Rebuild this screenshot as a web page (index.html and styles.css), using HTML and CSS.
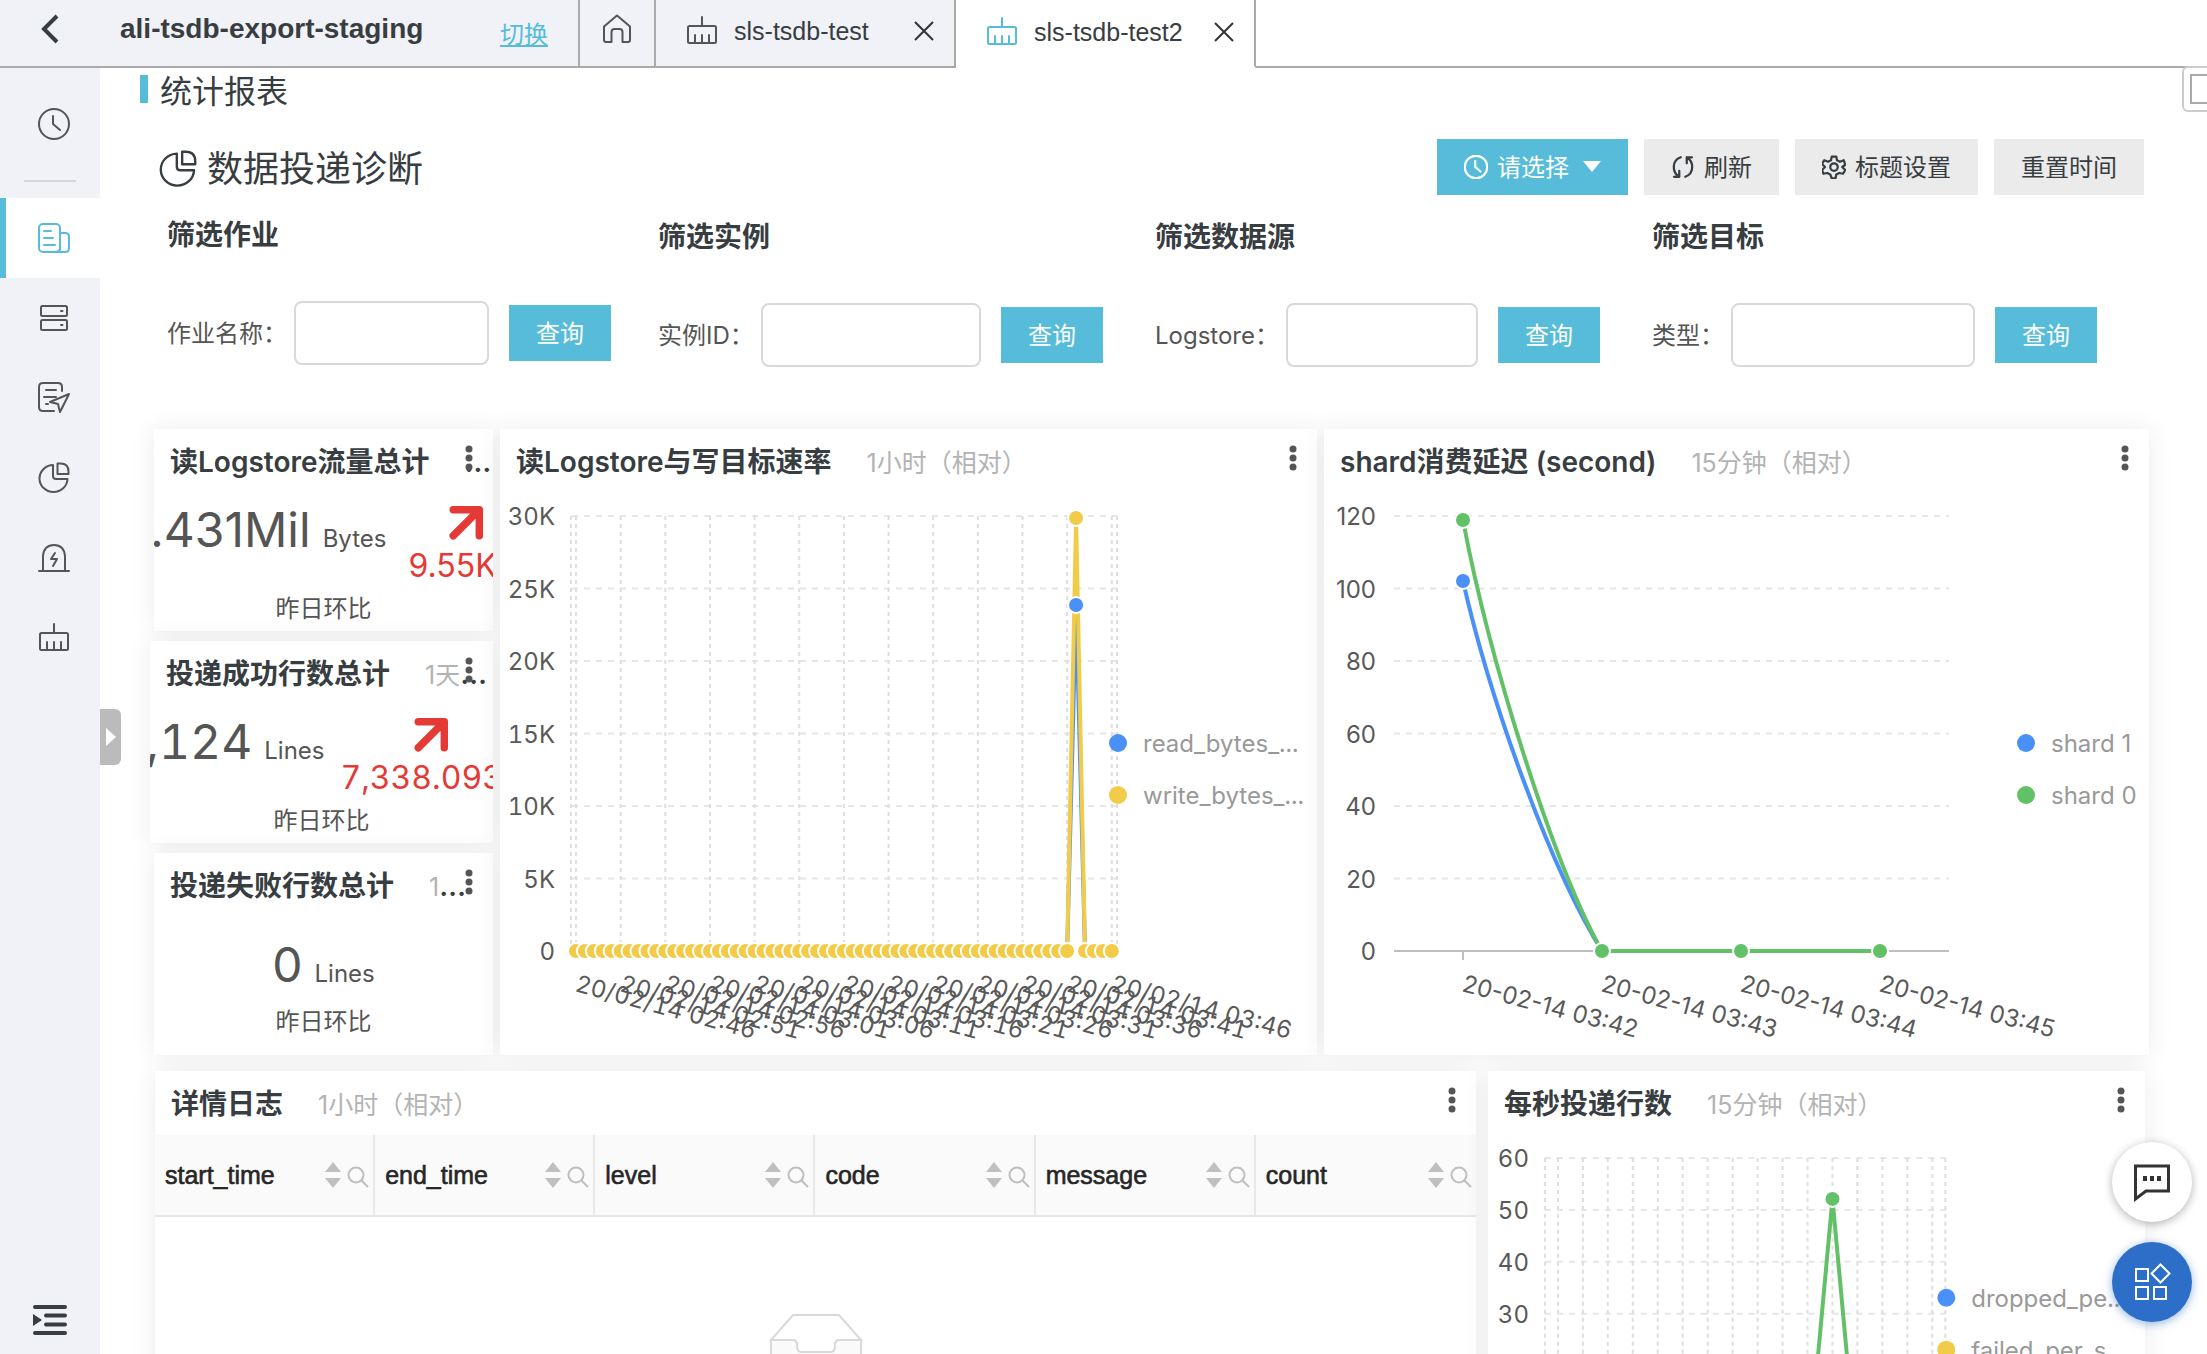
FILE: index.html
```html
<!DOCTYPE html>
<html lang="zh-CN">
<head>
  <meta charset="UTF-8">
  <title>数据投递诊断</title>
  <link rel="stylesheet" href="styles.css">
</head>
<body>

  <!-- shared icons -->
  <svg class="sprite" aria-hidden="true">
    <symbol id="clock" viewBox="0 0 32 32"><circle cx="16" cy="16" r="15"/><path d="M15 8v8l7 6"/></symbol>
    <symbol id="pie" viewBox="0 0 32 32"><path d="M15 3A14 13.5 0 1 0 29.500 17H18q-3 0-3-3z"/><path d="M19.500 1.500h3q8 0 8 8v2.500h-11z"/></symbol>
    <symbol id="brush" viewBox="0 0 32 32"><rect x="2" y="11" width="28" height="17" rx="1.500"/><path d="M16 11V2M9 20v8M16 20v8M23 20v8"/></symbol>
    <symbol id="close" viewBox="0 0 20 20"><path d="M1 1l18 18M19 1L1 19"/></symbol>
    <symbol id="kebab" viewBox="0 0 8 26"><circle cx="4" cy="4" r="3.500"/><circle cx="4" cy="13" r="3.500"/><circle cx="4" cy="22" r="3.500"/></symbol>
    <symbol id="arrow" viewBox="0 0 32 32"><path d="M4 3.500h24.500V28M27 5L4 28"/></symbol>
    <symbol id="sort" viewBox="0 0 16 26"><path d="M8 0l8 10H0zM8 26l8-10H0z"/></symbol>
    <symbol id="search" viewBox="0 0 22 22"><circle cx="9" cy="9" r="7.500"/><path d="M14 14l7 7"/></symbol>
  </svg>

  <header class="topbar">
    <div class="project">
      <button class="back" aria-label="返回"><svg viewBox="0 0 20 30"><path d="M17 2L4 15l13 13"/></svg></button>
      <span class="project-name">ali-tsdb-export-staging</span>
      <a class="switch" href="#">切换</a>
    </div>
    <a class="home" href="#" aria-label="首页"><svg class="icon" viewBox="0 0 32 32"><path d="M3 13.500L16 2.500l13 11V27q0 2-2 2h-5.500V19q0-3-3-3h-5q-3 0-3 3v10H5q-2 0-2-2z"/></svg></a>
    <div class="tab">
      <svg class="icon"><use href="#brush"/></svg>
      <a href="#">sls-tsdb-test</a>
      <button class="close" aria-label="关闭"><svg><use href="#close"/></svg></button>
    </div>
    <div class="tab active">
      <svg class="icon"><use href="#brush"/></svg>
      <a href="#">sls-tsdb-test2</a>
      <button class="close" aria-label="关闭"><svg><use href="#close"/></svg></button>
    </div>
    <div class="topbar-rest"></div>
  </header>

  <div class="layout">
    <nav class="sidebar">
      <a class="history" href="#" aria-label="历史"><svg class="icon"><use href="#clock"/></svg></a>
      <a class="active" href="#" aria-label="日志库"><svg class="icon" viewBox="0 0 32 32"><rect x="1" y="2" width="21" height="28" rx="4"/><path d="M22 11h5q4 0 4 4v11q0 4-4 4h-9q4 0 4-4M6 9h7M6 16h9M6 23h11"/></svg></a>
      <a href="#" aria-label="资源"><svg class="icon" viewBox="0 0 32 32"><rect x="3" y="4" width="26" height="10" rx="1.500"/><rect x="3" y="18" width="26" height="10" rx="1.500"/><path d="M23 9h1.500M23 23h1.500"/></svg></a>
      <a href="#" aria-label="作业"><svg class="icon" viewBox="0 0 32 32"><path d="M24 9V5q0-4-4-4H5Q1 1 1 5v20q0 4 4 4h11M8 8h10M6 15h12M8 22h2"/><path d="M31 12l-9 18-2-8-8-2z"/></svg></a>
      <a href="#" aria-label="仪表盘"><svg class="icon"><use href="#pie"/></svg></a>
      <a href="#" aria-label="告警"><svg class="icon" viewBox="0 0 32 32"><path d="M1 29h30M5 29V14Q6 3 16 3t11 11v15M17 11l-4 6h6l-4 7"/></svg></a>
      <a href="#" aria-label="清理"><svg class="icon"><use href="#brush"/></svg></a>
      <button class="menu-toggle" aria-label="展开菜单"><svg viewBox="0 0 36 32"><path d="M3 3h30M14 11.500h19M14 20.500h19M3 29h30"/><path class="solid" d="M1 10v12l9-6z"/></svg></button>
    </nav>

    <main class="content">
      <h1 class="section-title">统计报表</h1>

      <div class="page-head">
        <h2><svg class="icon"><use href="#pie"/></svg>数据投递诊断</h2>
        <div class="actions">
          <button class="btn primary"><svg class="icon"><use href="#clock"/></svg>请选择<span class="caret"></span></button>
          <button class="btn"><svg class="icon" viewBox="0 0 32 32"><path d="M13 3C1 7 1 23 11 29M11 21v8H4M19 29C31 25 31 9 21 3M21 11V3h7"/></svg>刷新</button>
          <button class="btn"><svg class="icon" viewBox="0 0 32 32"><path d="M13 2h6l1 5 4 2 5-2 2 6-4 3 4 4-3 5-5-1-4 2-1 5h-5l-2-5-4-2-5 1-2-5 4-4-4-4 3-5 5 2 4-2z"/><circle cx="16" cy="16" r="5"/></svg>标题设置</button>
          <button class="btn">重置时间</button>
        </div>
      </div>

      <div class="filters">
        <form class="filter">
          <h3>筛选作业</h3>
          <div class="filter-row"><label for="job">作业名称：</label><input id="job" type="text"><button class="btn primary" type="button">查询</button></div>
        </form>
        <form class="filter">
          <h3>筛选实例</h3>
          <div class="filter-row"><label for="instance">实例ID：</label><input id="instance" type="text"><button class="btn primary" type="button">查询</button></div>
        </form>
        <form class="filter">
          <h3>筛选数据源</h3>
          <div class="filter-row"><label for="logstore">Logstore：</label><input id="logstore" type="text"><button class="btn primary" type="button">查询</button></div>
        </form>
        <form class="filter">
          <h3>筛选目标</h3>
          <div class="filter-row"><label for="target">类型：</label><input id="target" type="text"><button class="btn primary" type="button">查询</button></div>
        </form>
      </div>

      <div class="row row-top">
        <div class="stats">
          <section class="card stat">
            <div class="card-title">读Logstore流量总计<span>&emsp;1天（相对）</span></div>
            <button class="kebab" aria-label="更多"><svg><use href="#kebab"/></svg></button>
            <div class="stat-row">
              <p class="value">.431Mil<small>Bytes</small></p>
              <div class="trend"><svg><use href="#arrow"/></svg><span>9.55K</span></div>
            </div>
            <p class="caption">昨日环比</p>
          </section>
          <section class="card stat wide">
            <div class="card-title">投递成功行数总计<span>&emsp;1天（相对）</span></div>
            <button class="kebab" aria-label="更多"><svg><use href="#kebab"/></svg></button>
            <div class="stat-row">
              <p class="value">,124<small>Lines</small></p>
              <div class="trend"><svg><use href="#arrow"/></svg><span>7,338.093</span></div>
            </div>
            <p class="caption">昨日环比</p>
          </section>
          <section class="card stat plain">
            <div class="card-title">投递失败行数总计<span>&emsp;1天（相对）</span></div>
            <button class="kebab" aria-label="更多"><svg><use href="#kebab"/></svg></button>
            <div class="stat-row">
              <p class="value">0<small>Lines</small></p>
            </div>
            <p class="caption">昨日环比</p>
          </section>
        </div>

        <section class="card">
          <div class="card-title">读Logstore与写目标速率<span>&emsp;1小时（相对）</span></div>
          <button class="kebab" aria-label="更多"><svg><use href="#kebab"/></svg></button>
          <svg class="chart tabular" id="rate" viewBox="0 0 817 562"></svg>
        </section>

        <section class="card">
          <div class="card-title">shard消费延迟 (second)<span>&emsp;15分钟（相对）</span></div>
          <button class="kebab" aria-label="更多"><svg><use href="#kebab"/></svg></button>
          <svg class="chart" id="delay" viewBox="0 0 825 562"></svg>
        </section>
      </div>

      <div class="row row-bottom">
        <section class="card">
          <div class="card-title">详情日志<span>&emsp;1小时（相对）</span></div>
          <button class="kebab" aria-label="更多"><svg><use href="#kebab"/></svg></button>
          <table class="logs">
            <thead>
              <tr>
                <th><div>start_time<svg class="sort"><use href="#sort"/></svg><svg class="search"><use href="#search"/></svg></div></th>
                <th><div>end_time<svg class="sort"><use href="#sort"/></svg><svg class="search"><use href="#search"/></svg></div></th>
                <th><div>level<svg class="sort"><use href="#sort"/></svg><svg class="search"><use href="#search"/></svg></div></th>
                <th><div>code<svg class="sort"><use href="#sort"/></svg><svg class="search"><use href="#search"/></svg></div></th>
                <th><div>message<svg class="sort"><use href="#sort"/></svg><svg class="search"><use href="#search"/></svg></div></th>
                <th><div>count<svg class="sort"><use href="#sort"/></svg><svg class="search"><use href="#search"/></svg></div></th>
              </tr>
            </thead>
            <tbody>
              <tr><td colspan="6"><svg class="empty" viewBox="0 0 94 80"><path d="M24 2h46l22 25H70q-4 0-4 6 0 6-4 6H32q-4 0-4-6 0-6-4-6H2z" fill="#fff"/><path d="M2 27h22q4 0 4 6 0 6 4 6h30q4 0 4-6 0-6 4-6h22v40q0 6-6 6H8q-6 0-6-6z" fill="#fafafa"/></svg></td></tr>
            </tbody>
          </table>
        </section>

        <section class="card">
          <div class="card-title">每秒投递行数<span>&emsp;15分钟（相对）</span></div>
          <button class="kebab" aria-label="更多"><svg><use href="#kebab"/></svg></button>
          <svg class="chart tabular" id="lines" viewBox="0 0 658 420"></svg>
        </section>
      </div>
    </main>
  </div>

  <button class="drawer" aria-label="展开"></button>
  <button class="fullscreen" aria-label="全屏"><span></span></button>
  <button class="fab chat" aria-label="反馈"><svg viewBox="0 0 40 40"><path d="M3.500 4h33v25H14L3.500 37z"/><path class="solid" d="M11 14h4v5h-4zM18 14h4v5h-4zM25 14h4v5h-4z"/></svg></button>
  <button class="fab apps" aria-label="应用"><svg viewBox="0 0 40 40"><path d="M4 7h12v12H4zM4 25h12v12H4zM22 25h12v12H22zM28.500 2.500l9 9-9 9-9-9z"/></svg></button>

  <script src="script.js"></script>
</body>
</html>
```

FILE: styles.css
```css
* {
  box-sizing: border-box;
}

body {
  margin: 0;
  height: 100vh;
  overflow: hidden;
  display: flex;
  flex-direction: column;
  background: #fff;
  color: #373d41;
  font-family: Inter, "Noto Sans CJK SC", sans-serif;
  font-size: 24px;
}

h1, h2, h3, p {
  margin: 0;
}

button, input {
  font: inherit;
}

button {
  padding: 0;
  border: none;
  background: none;
  color: inherit;
  cursor: pointer;
}

.sprite {
  display: none;
}

.icon {
  width: 32px;
  height: 32px;
  flex: none;
  fill: none;
  stroke: #555;
  stroke-width: 2;
  stroke-linecap: round;
  stroke-linejoin: round;
}

/* Top bar */
.topbar {
  display: flex;
  height: 68px;
  flex: none;
  background: #f0f2f7;
  font-family: "Liberation Sans", "Noto Sans CJK SC", sans-serif;
}

.topbar > * {
  border-bottom: 2px solid #aaa;
  border-right: 2px solid #aaa;
}

.project {
  display: flex;
  align-items: center;
  width: 580px;
  padding: 0 30px 8px 40px;
}

.back {
  margin-right: 60px;
  height: 30px;
}

.back svg {
  display: block;
  width: 20px;
  height: 30px;
  fill: none;
  stroke: #373d41;
  stroke-width: 4;
}

.project-name {
  font-size: 28px;
  font-weight: bold;
}

.switch {
  margin-left: auto;
  padding-top: 6px;
  color: #56bcda;
}

.home {
  display: flex;
  align-items: center;
  justify-content: center;
  width: 76px;
  padding-bottom: 8px;
}

.tab {
  display: flex;
  align-items: center;
  width: 300px;
  padding: 0 20px 4px 30px;
  font-size: 25px;
}

.tab a {
  margin-left: 16px;
  color: #373d41;
  text-decoration: none;
}

.tab.active {
  background: #fff;
  border-bottom-color: #fff;
  padding-bottom: 2px;
}

.tab.active .icon {
  stroke: #56bcda;
}

.close {
  margin-left: auto;
  height: 20px;
}

.close svg {
  display: block;
  width: 20px;
  height: 20px;
  stroke: #333;
  stroke-width: 2;
}

.topbar-rest {
  flex: 1;
  background: #fff;
  border-right: none;
}

.layout {
  display: flex;
  flex: 1;
  min-height: 0;
}

/* Sidebar */
.sidebar {
  display: flex;
  flex-direction: column;
  width: 100px;
  flex: none;
  background: #f0f2f7;
}

.sidebar a {
  display: flex;
  align-items: center;
  height: 80px;
  padding-left: 38px;
}

.sidebar .history {
  height: 114px;
  margin: 0 24px 16px;
  padding-left: 14px;
  border-bottom: 2px solid #d5d7da;
}

.sidebar a.active {
  background: #fff;
  border-left: 6px solid #56bcda;
  padding-left: 32px;
}

.sidebar a.active .icon {
  stroke: #56bcda;
}

.menu-toggle {
  margin: auto 0 18px 32px;
  width: 36px;
  height: 32px;
}

.menu-toggle svg {
  display: block;
  stroke: #373d41;
  stroke-width: 4;
  stroke-linecap: round;
}

.menu-toggle .solid {
  fill: #373d41;
  stroke: none;
}

/* Content */
.content {
  flex: 1;
  min-width: 0;
  overflow: hidden;
  padding: 7px 58px 0 40px;
}

.section-title {
  border-left: 8px solid #56bcda;
  padding: 6px 0 0 12px;
  font-size: 32px;
  line-height: 22px;
  font-weight: normal;
}

.page-head {
  display: flex;
  align-items: center;
  justify-content: space-between;
  margin: 36px 5px 20px 19px;
}

.page-head h2 {
  display: flex;
  align-items: center;
  gap: 10px;
  padding-top: 4px;
  font-size: 36px;
  line-height: 52px;
  font-weight: normal;
}

.page-head h2 .icon {
  width: 38px;
  height: 38px;
  stroke: #373d41;
}

.actions {
  display: flex;
  gap: 16px;
}

.btn {
  display: flex;
  align-items: center;
  gap: 9px;
  height: 56px;
  padding: 0 27px 4px;
  background: #ebebeb;
  white-space: nowrap;
}

.btn .icon {
  width: 24px;
  height: 24px;
  margin-top: 4px;
  stroke: currentColor;
  stroke-width: 3;
}

.btn.primary {
  background: #56bcda;
  color: #fff;
}

.caret {
  margin: 2px 0 0 5px;
  border: 9px solid transparent;
  border-top: 11px solid #fff;
  border-bottom: none;
}

/* Filters */
.filters {
  display: grid;
  grid-template-columns: 491fr 497fr 497fr 497fr;
  padding-left: 27px;
}

.filter {
  min-width: 0;
  padding-right: 47px;
}

.filter + .filter {
  padding: 2px 52px 0 0;
}

.filter h3 {
  font-size: 28px;
  line-height: 40px;
  font-weight: 600;
}

.filter-row {
  display: flex;
  align-items: center;
  margin-top: 46px;
  color: #555;
}

.filter-row label {
  flex: none;
  padding-bottom: 4px;
}

.filter-row input {
  flex: 1;
  min-width: 0;
  height: 64px;
  margin: 0 20px 0 7px;
  padding: 0 12px;
  border: 2px solid #d9d9d9;
  border-radius: 8px;
}

/* Cards */
.row {
  display: grid;
}

.row-top {
  grid-template-columns: 343fr 817fr 825fr;
  gap: 7px;
  margin-top: 62px;
  padding-left: 10px;
}

.row-bottom {
  grid-template-columns: 1321fr 657fr;
  gap: 12px;
  margin-top: 16px;
  padding: 0 4px 0 15px;
}

.card {
  position: relative;
  min-width: 0;
  background: #fff;
  box-shadow: 0 0 24px rgba(0, 0, 0, 0.08);
}

.card-title {
  height: 64px;
  padding-left: 16px;
  overflow: hidden;
  font-size: 28px;
  line-height: 66px;
  font-weight: 600;
  white-space: nowrap;
  text-overflow: ellipsis;
}

.card-title span {
  margin-left: 10px;
  font-size: 25px;
  font-weight: normal;
  color: #b3b3b3;
}

.kebab {
  position: absolute;
  top: 16px;
  right: 20px;
  height: 26px;
}

.kebab svg {
  display: block;
  width: 8px;
  height: 26px;
  fill: #555;
}

.stats {
  display: flex;
  flex-direction: column;
  gap: 10px;
  min-width: 0;
}

.stat {
  height: 202px;
  margin-left: 4px;
  color: #555;
}

.stat .card-title {
  color: #373d41;
}

.stat-row {
  display: flex;
  height: 101px;
  overflow: hidden;
  white-space: nowrap;
}

.value {
  margin-left: -4px;
  font-size: 48px;
  line-height: 74px;
}

.value small {
  margin-left: 12px;
  font-size: 24px;
}

.trend {
  display: flex;
  flex-direction: column;
  align-items: center;
  flex: none;
  width: 115px;
  margin: 13px 0 0 22px;
  color: #e53935;
  font-size: 32px;
  line-height: 38px;
}

.trend span {
  align-self: flex-start;
}

.trend svg {
  width: 34px;
  height: 34px;
  flex: none;
  margin-bottom: 7px;
  fill: none;
  stroke: #e53935;
  stroke-width: 7;
  stroke-linecap: round;
  stroke-linejoin: round;
}

.caption {
  line-height: 30px;
  text-align: center;
}

.wide {
  margin-left: 0;
}

.wide .stat-row {
  font-variant-numeric: tabular-nums;
}

.wide .trend {
  width: 180px;
  margin-left: 16px;
}

.plain .card-title {
  padding-right: 12px;
}

.plain .stat-row {
  height: 90px;
  padding-top: 11px;
  justify-content: center;
}

.plain .value {
  margin-left: 0;
}

/* Charts */
.chart {
  display: block;
  width: 100%;
  font-size: 24px;
  fill: #595959;
}

.chart.tabular {
  font-variant-numeric: tabular-nums;
}

.chart .legend {
  fill: #999;
}

.chart .grid {
  stroke: #e6e6e6;
  stroke-width: 2;
  stroke-dasharray: 6 6;
}

.chart .grid.vertical {
  stroke: #dedede;
  stroke-dasharray: 4 4;
}

.chart .axis {
  stroke: #bfbfbf;
  stroke-width: 2;
}

.chart .line {
  fill: none;
  stroke-width: 4;
}

.chart .dot {
  stroke: #fff;
  stroke-width: 2;
}

/* Log table */
.logs {
  width: 100%;
  table-layout: fixed;
  border-collapse: separate;
  border-spacing: 0;
}

.logs th {
  height: 82px;
  padding: 0 4px 0 10px;
  background: #fafafa;
  border-right: 2px solid #e8e8e8;
  border-bottom: 2px solid #e8e8e8;
  color: #262626;
  font: 25px "Liberation Sans", sans-serif;
  -webkit-text-stroke: 0.6px #262626;
}

.logs th:last-child {
  border-right: none;
}

.logs th div {
  display: flex;
  align-items: center;
}

.logs .sort {
  width: 16px;
  height: 26px;
  margin: 0 6px 0 auto;
  fill: #bfbfbf;
}

.logs .search {
  width: 22px;
  height: 22px;
  margin-top: 4px;
  fill: none;
  stroke: #bfbfbf;
  stroke-width: 2;
}

.logs td {
  padding: 96px 0;
  text-align: center;
}

.empty {
  width: 94px;
  height: 80px;
  stroke: #d9d9d9;
  stroke-width: 2;
}

/* Floating controls */
.drawer {
  position: fixed;
  left: 100px;
  top: 709px;
  width: 21px;
  height: 56px;
  background: #bbb;
  border-radius: 0 6px 6px 0;
}

.drawer::after {
  content: "";
  display: block;
  margin-left: 6px;
  border: 9px solid transparent;
  border-left: 10px solid #fff;
  border-right: none;
}

.fullscreen {
  position: fixed;
  top: 66px;
  right: -20px;
  width: 45px;
  height: 46px;
  padding: 6px;
  background: #fff;
  border: 2px solid #ccc;
  border-radius: 6px;
}

.fullscreen span {
  display: block;
  height: 30px;
  border: 2px solid #aaa;
}

.fab {
  position: fixed;
  right: 15px;
  width: 80px;
  height: 80px;
  border-radius: 50%;
}

.fab svg {
  display: block;
  width: 40px;
  height: 40px;
  margin: auto;
  fill: none;
  stroke-width: 3;
}

.chat {
  bottom: 132px;
  background: #fff;
  box-shadow: 0 2px 10px rgba(0, 0, 0, 0.3);
}

.chat svg {
  stroke: #333;
}

.chat .solid {
  fill: #333;
  stroke: none;
}

.apps {
  bottom: 32px;
  background: #2d6fc8;
  box-shadow: 0 2px 10px rgba(45, 111, 200, 0.5);
}

.apps svg {
  stroke: #fff;
  stroke-width: 2;
}
```

FILE: script.js
```js
const BLUE = "#4a90f7";
const YELLOW = "#f2cc49";
const GREEN = "#62c067";

function draw(id, parts) {
  document.getElementById(id).innerHTML = parts.join("");
}

function line(x1, y1, x2, y2, cls) {
  return `<line class="${cls}" x1="${x1}" y1="${y1}" x2="${x2}" y2="${y2}"/>`;
}

function dot(x, y, color, r = 8) {
  return `<circle class="dot" cx="${x}" cy="${y}" r="${r}" fill="${color}"/>`;
}

function path(d, color) {
  return `<path class="line" d="${d}" stroke="${color}"/>`;
}

// horizontal grid lines with their labels
function yAxis(labels, top, step, labelX, left, right) {
  return labels.map((label, i) => {
    const y = top + i * step;
    const grid = label === "0" ? "" : line(left, y, right, y, "grid");
    return grid + `<text x="${labelX}" y="${y + 9}" text-anchor="end">${label}</text>`;
  });
}

function xLabel(x, y, text) {
  return `<text transform="translate(${x - 2} ${y}) rotate(15)">${text}</text>`;
}

function legend(x, y, color, text) {
  return `<circle cx="${x}" cy="${y}" r="9" fill="${color}"/><text class="legend" x="${x + 25}" y="${y + 9}">${text}</text>`;
}

// read / write rate, one point per minute
const rate = yAxis(["30K", "25K", "20K", "15K", "10K", "5K", "0"], 23, 72.5, 55, 72, 617);
const minute = 8.93;
const zero = 458;
rate.push(line(71, 23, 71, zero, "grid vertical"), line(617, 23, 617, zero, "grid vertical"));
["02:46", "02:51", "02:56", "03:01", "03:06", "03:11", "03:16", "03:21", "03:26", "03:31", "03:36", "03:41", "03:46"].forEach((time, i) => {
  const x = 76 + i * 5 * minute;
  rate.push(line(x, 23, x, zero, "grid vertical"), xLabel(x, 498, "20/02/14 " + time));
});
const peak = 76 + 56 * minute;
rate.push(path(`M${peak - minute} ${zero}L${peak} 112L${peak + minute} ${zero}`, BLUE));
rate.push(path(`M${peak - minute} ${zero}L${peak} 25L${peak + minute} ${zero}`, YELLOW));
for (let i = 0; i <= 60; i++) {
  if (i !== 56) rate.push(dot(76 + i * minute, zero, YELLOW));
}
rate.push(dot(peak, 112, BLUE), dot(peak, 25, YELLOW));
rate.push(legend(618, 250, BLUE, "read_bytes_..."), legend(618, 302, YELLOW, "write_bytes_..."));
draw("rate", rate);

// shard delay
const delay = yAxis(["120", "100", "80", "60", "40", "20", "0"], 23, 72.5, 52, 70, 625);
delay.push(line(70, zero, 625, zero, "axis"), line(139, zero, 139, zero + 9, "axis"));
delay.push(path("M139 88C166 207 226 375 278 458H556", BLUE));
delay.push(path("M139 27C166 171 231 375 278 458H556", GREEN));
delay.push(dot(139, 88, BLUE), dot(139, 27, GREEN));
["03:42", "03:43", "03:44", "03:45"].forEach((time, i) => {
  const x = 139 + i * 139;
  if (i > 0) delay.push(dot(x, zero, GREEN));
  delay.push(xLabel(x, 498, "20-02-14 " + time));
});
delay.push(legend(702, 250, BLUE, "shard 1"), legend(702, 302, GREEN, "shard 0"));
draw("delay", delay);

// lines per second
const lines = yAxis(["60", "50", "40", "30", "20", "10", "0"], 23, 52, 41, 57, 458);
lines.push(line(57, 23, 57, 335, "grid vertical"), line(458, 23, 458, 335, "grid vertical"));
for (let i = 0; i < 16; i++) {
  lines.push(line(70 + i * 25, 23, 70 + i * 25, 335, "grid vertical"));
}
lines.push(path("M320 335L345 64L370 335", GREEN), dot(345, 64, GREEN));
lines.push(legend(459, 163, BLUE, "dropped_pe..."), legend(459, 215, YELLOW, "failed_per_s..."));
draw("lines", lines);
```
